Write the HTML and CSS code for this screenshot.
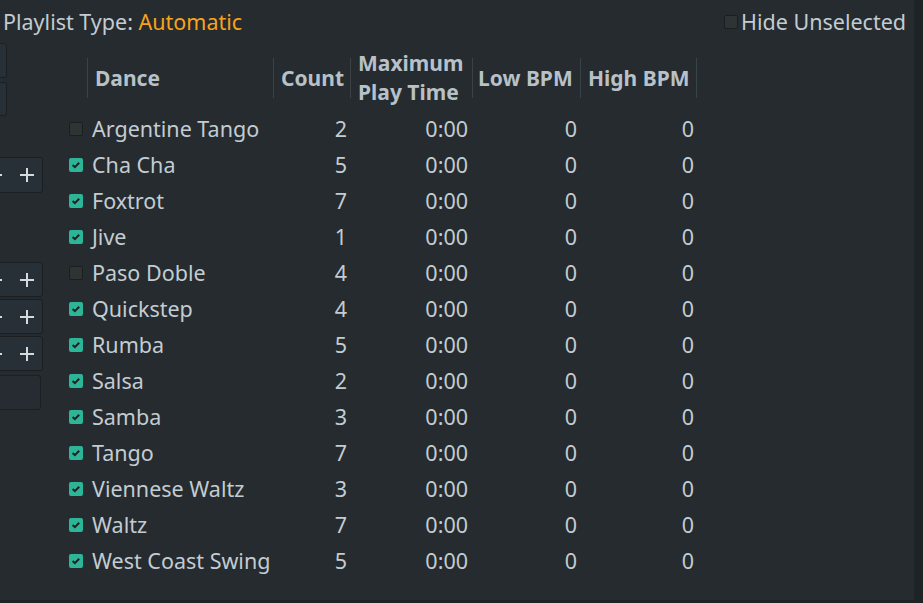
FILE: index.html
```html
<!DOCTYPE html>
<html>
<head>
<meta charset="utf-8">
<link rel="stylesheet" href="styles.css">
</head>
<body>
<div class="panel">
  <div class="topbar">
    <div class="ptype">Playlist Type: <span class="auto">Automatic</span></div>
    <label class="hide"><span class="cb"></span>Hide Unselected</label>
  </div>
  <div class="content">
    <div class="side">
      <div class="box btn1"></div>
      <div class="box btn2"></div>
      <div class="box spin s1"><span class="minus"></span><span class="plus"></span></div>
      <div class="box spin s2"><span class="minus"></span><span class="plus"></span></div>
      <div class="box spin s3"><span class="minus"></span><span class="plus"></span></div>
      <div class="box spin s4"><span class="minus"></span><span class="plus"></span></div>
      <div class="box field"></div>
    </div>
    <div class="table">
      <div class="head">
        <div class="hc hcheck"></div>
        <div class="hc">Dance</div>
        <div class="hc">Count</div>
        <div class="hc">Maximum<br>Play Time</div>
        <div class="hc hlow">Low BPM</div>
        <div class="hc">High BPM</div>
      </div>
      <div class="row"><div class="c"><span class="cb"></span></div><div class="name">Argentine Tango</div><div class="num">2</div><div class="num t">0:00</div><div class="num">0</div><div class="num">0</div></div>
      <div class="row"><div class="c"><span class="cb on"></span></div><div class="name">Cha Cha</div><div class="num">5</div><div class="num t">0:00</div><div class="num">0</div><div class="num">0</div></div>
      <div class="row"><div class="c"><span class="cb on"></span></div><div class="name">Foxtrot</div><div class="num">7</div><div class="num t">0:00</div><div class="num">0</div><div class="num">0</div></div>
      <div class="row"><div class="c"><span class="cb on"></span></div><div class="name">Jive</div><div class="num">1</div><div class="num t">0:00</div><div class="num">0</div><div class="num">0</div></div>
      <div class="row"><div class="c"><span class="cb"></span></div><div class="name">Paso Doble</div><div class="num">4</div><div class="num t">0:00</div><div class="num">0</div><div class="num">0</div></div>
      <div class="row"><div class="c"><span class="cb on"></span></div><div class="name">Quickstep</div><div class="num">4</div><div class="num t">0:00</div><div class="num">0</div><div class="num">0</div></div>
      <div class="row"><div class="c"><span class="cb on"></span></div><div class="name">Rumba</div><div class="num">5</div><div class="num t">0:00</div><div class="num">0</div><div class="num">0</div></div>
      <div class="row"><div class="c"><span class="cb on"></span></div><div class="name">Salsa</div><div class="num">2</div><div class="num t">0:00</div><div class="num">0</div><div class="num">0</div></div>
      <div class="row"><div class="c"><span class="cb on"></span></div><div class="name">Samba</div><div class="num">3</div><div class="num t">0:00</div><div class="num">0</div><div class="num">0</div></div>
      <div class="row"><div class="c"><span class="cb on"></span></div><div class="name">Tango</div><div class="num">7</div><div class="num t">0:00</div><div class="num">0</div><div class="num">0</div></div>
      <div class="row"><div class="c"><span class="cb on"></span></div><div class="name">Viennese Waltz</div><div class="num">3</div><div class="num t">0:00</div><div class="num">0</div><div class="num">0</div></div>
      <div class="row"><div class="c"><span class="cb on"></span></div><div class="name">Waltz</div><div class="num">7</div><div class="num t">0:00</div><div class="num">0</div><div class="num">0</div></div>
      <div class="row"><div class="c"><span class="cb on"></span></div><div class="name">West Coast Swing</div><div class="num">5</div><div class="num t">0:00</div><div class="num">0</div><div class="num">0</div></div>
    </div>
  </div>
</div>
</body>
</html>
```
FILE: styles.css
```css
html, body {
  margin: 0;
  padding: 0;
  width: 923px;
  height: 603px;
  background: #1e2326;
  overflow: hidden;
}
body {
  font-family: "Noto Sans", "Open Sans", sans-serif;
  font-size: 21.5px;
  color: #c3ccd2;
}
.panel {
  width: 914px;
  height: 600px;
  background: #252b2f;
  overflow: hidden;
  display: flex;
  flex-direction: column;
}
.topbar {
  height: 43px;
  display: flex;
  align-items: center;
  justify-content: space-between;
  padding: 0 8px 0 3px;
  box-sizing: border-box;
}
.ptype { line-height: 24px; padding-top: 1px; }
.auto { color: #f8a31b; }
.hide {
  display: flex;
  align-items: center;
  line-height: 24px;
  padding-top: 1px;
}
.hide .cb { margin-right: 3px; margin-top: -1px; }
.cb {
  display: inline-block;
  width: 14px;
  height: 14px;
  box-sizing: border-box;
  border: 1px solid #1a1e20;
  border-radius: 2px;
  background: #2d3433;
}
.cb.on {
  border: none;
  background: #2db598 url("data:image/svg+xml;utf8,<svg xmlns='http://www.w3.org/2000/svg' width='14' height='14' viewBox='0 0 14 14'><path d='M3.6 7 L5.9 9.2 L10.2 4.8' fill='none' stroke='%231c2226' stroke-width='2'/></svg>") no-repeat center;
}
.content {
  display: flex;
  flex: 1;
}
.side {
  width: 63px;
  margin-left: -20px;
  display: flex;
  flex-direction: column;
  flex-shrink: 0;
}
.box {
  box-sizing: border-box;
  border: 1px solid #1b1f22;
  border-radius: 3px;
  background: #283037;
  position: relative;
}
.btn1 { width: 27px; height: 35px; }
.btn2 { width: 27px; height: 34px; margin-top: 4px; }
.spin { width: 63px; height: 36px; }
.s1 { margin-top: 41px; }
.s2 { margin-top: 69px; height: 35px; }
.s3 { margin-top: 2px; height: 35px; }
.s4 { margin-top: 2px; height: 35px; }
.field { width: 61px; height: 35px; margin-top: 4px; background: #262c31; }
.minus, .plus {
  position: absolute;
  top: 50%;
  width: 14px;
  height: 2px;
  margin-top: -1px;
  background: #d5dadd;
}
.minus { left: 7px; }
.plus { left: 39px; }
.plus::after {
  content: "";
  position: absolute;
  left: 6px;
  top: -6px;
  width: 2px;
  height: 14px;
  background: #d5dadd;
}
.table {
  margin-left: 19px;
  display: flex;
  flex-direction: column;
}
.head, .row {
  display: grid;
  grid-template-columns: 25px 186px 77px 122px 108px 117px;
}
.head {
  margin-top: 15px;
  margin-bottom: 13px;
  height: 40px;
}
.hc {
  height: 40px;
  border-left: 1px solid #3a4247;
  box-sizing: border-box;
  display: flex;
  align-items: center;
  padding-left: 7px;
  font-weight: bold;
  font-size: 21px;
  color: #b7c1c7;
  line-height: 29px;
  white-space: nowrap;
}
.hc.hlow { padding-left: 5px; }
.hc:last-child { border-right: 1px solid #3a4247; }
.hc.hcheck { border-left: none; }
.row {
  height: 36px;
  align-items: center;
  line-height: 24px;
}
.c { padding-left: 7px; display: flex; align-items: center; }
.name { padding-left: 5px; white-space: nowrap; }
.num { text-align: right; padding-right: 3px; }
.num.t { padding-right: 4px; }
```
